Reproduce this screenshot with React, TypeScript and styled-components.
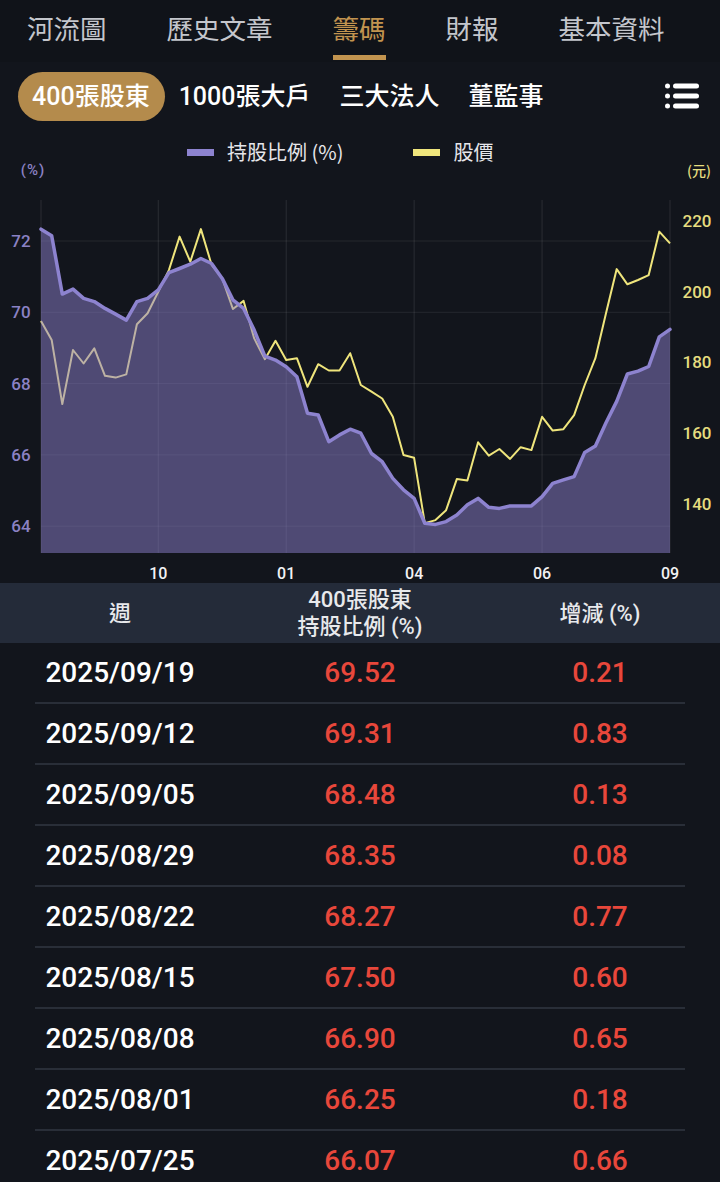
import React from 'react';
import styled, { createGlobalStyle } from 'styled-components';

const gold = '#c2944f';
const purple = '#8d83cf';
const yellow = '#efe57c';
const red = '#e8473b';

const GlobalStyle = createGlobalStyle`
  html, body {
    margin: 0;
    padding: 0;
    background: #12151c;
  }
  body {
    font-family: "Noto Sans CJK TC", "Noto Sans", sans-serif;
    color: #fff;
  }
`;

const Page = styled.div`
  width: 720px;
  height: 1182px;
  overflow: hidden;
  background: #12151c;
`;

const TopBar = styled.div`
  display: flex;
  gap: 60px;
  height: 62px;
  padding-left: 27px;
  background: #101319;
`;

const Tab = styled.div<{ $active?: boolean }>`
  height: 60px;
  box-sizing: border-box;
  padding-top: 10px;
  font-size: 26.5px;
  line-height: 36px;
  color: ${(p) => (p.$active ? gold : '#c4c6cc')};
  border-bottom: 5px solid ${(p) => (p.$active ? gold : 'transparent')};
`;

const SubBar = styled.div`
  display: flex;
  align-items: center;
  height: 68px;
  padding: 0 21px 0 18px;
`;

const SubTab = styled.div<{ $active?: boolean }>`
  height: 49px;
  padding: 0 15px 0 14px;
  border-radius: 25px;
  font-family: Roboto, "Noto Sans CJK TC", sans-serif;
  font-size: 25px;
  font-weight: 500;
  line-height: 49px;
  color: #fff;
  background: ${(p) => (p.$active ? '#b48b4c' : 'transparent')};
`;

const MenuButton = styled.div`
  margin-left: auto;
  display: flex;
`;

const Legend = styled.div`
  display: flex;
  gap: 70px;
  padding: 10px 0 0 187px;
  height: 20px;
`;

const LegendItem = styled.div`
  display: flex;
  align-items: center;
  gap: 13px;
  height: 24px;
  font-size: 20px;
  line-height: 24px;
  color: #e6e6ea;
`;

const Swatch = styled.span<{ $color: string }>`
  width: 27px;
  height: 7px;
  background: ${(p) => p.$color};
`;

const ChartSvg = styled.svg`
  display: block;
`;

const TableHead = styled.div`
  display: grid;
  grid-template-columns: repeat(3, 1fr);
  align-items: center;
  height: 60px;
  background: #242b39;
  font-family: Roboto, "Noto Sans CJK TC", sans-serif;
  font-size: 22px;
  font-weight: 500;
  line-height: 27px;
  color: #e8e9ec;
  text-align: center;
`;

const Row = styled.div`
  display: grid;
  grid-template-columns: repeat(3, 1fr);
  align-items: center;
  height: 61px;
  box-sizing: border-box;
  padding-bottom: 2px;
  text-align: center;
  font-family: Roboto, "Liberation Sans", sans-serif;
  font-size: 28px;
  font-weight: 500;
  background-image: linear-gradient(#292e38, #292e38);
  background-size: calc(100% - 70px) 2px;
  background-position: center bottom;
  background-repeat: no-repeat;
`;

const Cell = styled.div<{ $up?: boolean }>`
  color: ${(p) => (p.$up ? red : '#fff')};
`;

const holding = [
  72.33, 72.15, 70.51, 70.65, 70.39, 70.3, 70.11, 69.95, 69.78, 70.3,
  70.39, 70.63, 71.11, 71.23, 71.35, 71.51, 71.37, 70.95, 70.35, 70.11,
  69.5, 68.77, 68.66, 68.47, 68.19, 67.17, 67.12, 66.37, 66.56, 66.72,
  66.61, 66.04, 65.81, 65.34, 65.02, 64.78, 64.08, 64.05, 64.13, 64.31,
  64.6, 64.78, 64.53, 64.5, 64.57, 64.57, 64.57, 64.83, 65.2, 65.3,
  65.39, 66.07, 66.25, 66.9, 67.5, 68.27, 68.35, 68.48, 69.31, 69.52,
];

const price = [
  191.7, 186.3, 168.2, 183.5, 179.7, 184.0, 176.2, 175.7, 176.6, 190.8,
  193.9, 200.0, 206.1, 215.6, 208.5, 217.7, 207.6, 203.8, 195.1, 197.4,
  186.8, 180.9, 186.1, 180.7, 181.2, 173.1, 179.5, 177.7, 177.7, 182.6,
  173.6, 171.7, 169.8, 164.6, 153.8, 153.0, 134.5, 135.4, 138.2, 147.0,
  146.6, 157.4, 153.6, 155.5, 152.7, 156.0, 155.2, 164.6, 160.7, 161.1,
  165.1, 173.6, 181.2, 193.9, 206.4, 202.1, 203.3, 204.7, 217.0, 213.7,
];

const rows = [
  ['2025/09/19', '69.52', '0.21'],
  ['2025/09/12', '69.31', '0.83'],
  ['2025/09/05', '68.48', '0.13'],
  ['2025/08/29', '68.35', '0.08'],
  ['2025/08/22', '68.27', '0.77'],
  ['2025/08/15', '67.50', '0.60'],
  ['2025/08/08', '66.90', '0.65'],
  ['2025/08/01', '66.25', '0.18'],
  ['2025/07/25', '66.07', '0.66'],
];

// plot geometry (svg coords, svg starts at page y 160)
const W = 720;
const H = 423;
const X0 = 41;
const X1 = 670;
const TOP = 40;
const BOTTOM = 393;
const step = (X1 - X0) / (holding.length - 1);
const px = (i: number) => X0 + i * step;
const yLeft = (v: number) => 81 + (72 - v) * 35.65;
const yRight = (p: number) => 61 + (220 - p) * 3.535;

const line = (vals: number[], f: (v: number) => number) =>
  vals.map((v, i) => `${i ? 'L' : 'M'}${px(i).toFixed(1)},${f(v).toFixed(1)}`).join(' ');

const xTicks = [
  { i: 11, label: '10' },
  { i: 23, label: '01' },
  { i: 35, label: '04' },
  { i: 47, label: '06' },
  { i: 59, label: '09' },
];

const labelFont = 'Roboto, "Liberation Sans", sans-serif';

const Chart = () => {
  const holdPath = line(holding, yLeft);
  const area = `${holdPath} L${X1},${BOTTOM} L${X0},${BOTTOM} Z`;
  return (
    <ChartSvg width={W} height={H} viewBox={`0 0 ${W} ${H}`}>
      <text x={33} y={15} fontSize={15} fill="#8b82c4" textAnchor="middle" fontFamily={labelFont} fontWeight={500} letterSpacing={1}>
        (%)
      </text>
      <text x={699} y={16} fontSize={14} fill="#e6dd7f" textAnchor="middle" fontFamily={'"Noto Sans CJK TC", sans-serif'} fontWeight={500}>
        (元)
      </text>
      {[72, 70, 68, 66, 64].map((v) => (
        <line key={v} x1={X0} x2={X1} y1={yLeft(v)} y2={yLeft(v)} stroke="rgba(255,255,255,0.08)" strokeWidth={1} />
      ))}
      {[0, ...xTicks.map((t) => t.i)].map((i) => (
        <line key={i} x1={px(i)} x2={px(i)} y1={TOP} y2={BOTTOM} stroke="rgba(255,255,255,0.1)" strokeWidth={1} />
      ))}
      <path d={line(price, yRight)} fill="none" stroke={yellow} strokeWidth={2} strokeLinejoin="round" />
      <path d={area} fill="rgba(139,128,204,0.5)" />
      <path d={holdPath} fill="none" stroke={purple} strokeWidth={3.5} strokeLinejoin="round" strokeLinecap="round" />
      {[72, 70, 68, 66, 64].map((v) => (
        <text key={v} x={21} y={yLeft(v) + 6} fontSize={17} fill="#8b82c4" textAnchor="middle" fontFamily={labelFont} fontWeight={500}>
          {v}
        </text>
      ))}
      {[220, 200, 180, 160, 140].map((p) => (
        <text key={p} x={697} y={yRight(p) + 6} fontSize={17} fill="#e6dd7f" textAnchor="middle" fontFamily={labelFont} fontWeight={500}>
          {p}
        </text>
      ))}
      {xTicks.map((t) => (
        <text key={t.label} x={px(t.i)} y={419} fontSize={16} fill="#f2f2f4" textAnchor="middle" fontFamily={labelFont} fontWeight={500}>
          {t.label}
        </text>
      ))}
    </ChartSvg>
  );
};

const MenuIcon = () => (
  <svg width="34" height="26" viewBox="0 0 34 26">
    {[3, 13, 23].map((y) => (
      <g key={y} fill="#fff">
        <circle cx="2.5" cy={y} r="2.5" />
        <rect x="8" y={y - 2.5} width="26" height="5" rx="2.5" />
      </g>
    ))}
  </svg>
);

const App = () => (
  <Page>
    <GlobalStyle />
    <TopBar>
      <Tab>河流圖</Tab>
      <Tab>歷史文章</Tab>
      <Tab $active>籌碼</Tab>
      <Tab>財報</Tab>
      <Tab>基本資料</Tab>
    </TopBar>
    <SubBar>
      <SubTab $active>400張股東</SubTab>
      <SubTab>1000張大戶</SubTab>
      <SubTab>三大法人</SubTab>
      <SubTab>董監事</SubTab>
      <MenuButton>
        <MenuIcon />
      </MenuButton>
    </SubBar>
    <Legend>
      <LegendItem>
        <Swatch $color={purple} />
        持股比例 (%)
      </LegendItem>
      <LegendItem>
        <Swatch $color={yellow} />
        股價
      </LegendItem>
    </Legend>
    <Chart />
    <TableHead>
      <div>週</div>
      <div>
        400張股東
        <br />
        持股比例 (%)
      </div>
      <div>增減 (%)</div>
    </TableHead>
    {rows.map(([date, pct, diff]) => (
      <Row key={date}>
        <Cell>{date}</Cell>
        <Cell $up>{pct}</Cell>
        <Cell $up>{diff}</Cell>
      </Row>
    ))}
  </Page>
);

export default App;
